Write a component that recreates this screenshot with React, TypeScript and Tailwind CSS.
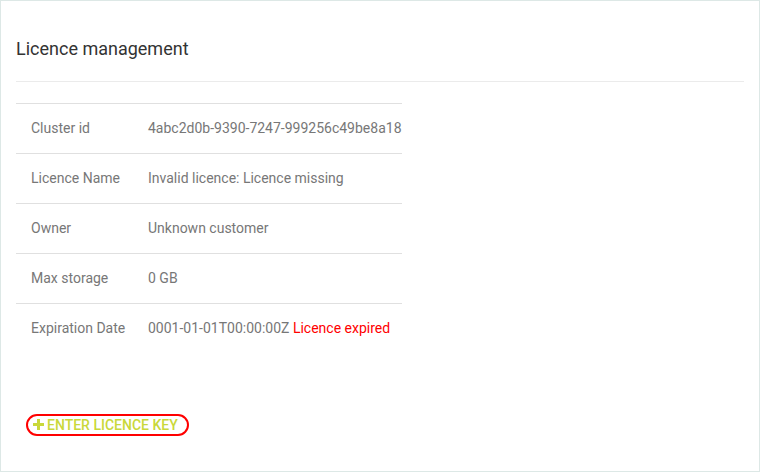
const rows: { label: string; value: string; note?: string }[] = [
  { label: "Cluster id", value: "4abc2d0b-9390-7247-999256c49be8a18" },
  { label: "Licence Name", value: "Invalid licence: Licence missing" },
  { label: "Owner", value: "Unknown customer" },
  { label: "Max storage", value: "0 GB" },
  {
    label: "Expiration Date",
    value: "0001-01-01T00:00:00Z",
    note: "Licence expired",
  },
];

export default function App() {
  return (
    <div className="h-[472px] w-[760px] bg-white font-['Roboto',sans-serif]">
      <div className="flex h-full flex-col border border-[#dde8e6] px-[15px]">
        <h2 className="pt-[38px] text-[18px] font-normal leading-[20px] text-[#333]">
          Licence management
        </h2>
        <div className="mt-[22px] h-px w-[728px] bg-[#ebebeb]" />
        <table className="mt-[21px] w-[386px] border-collapse text-[14px] text-[#777]">
          <tbody>
            {rows.map((r) => (
              <tr key={r.label} className="h-[50px] border-t border-[#e0e0e0]">
                <td className="w-[132px] pl-[15px] align-middle">{r.label}</td>
                <td className="align-middle whitespace-nowrap">
                  {r.value}
                  {r.note ? (
                    <span className="text-[#ff0000]"> {r.note}</span>
                  ) : null}
                </td>
              </tr>
            ))}
          </tbody>
        </table>
        <div className="mt-[60px] pl-[10px]">
          <button className="flex h-[22px] items-center gap-[3px] rounded-full border-2 border-[#ff0000] pr-[9px] pl-[5px] text-[14px] font-medium leading-none text-[#c9d83a]">
            <svg width="11" height="11" viewBox="0 0 11 11">
              <path d="M4 0h3v4h4v3H7v4H4V7H0V4h4z" fill="#c9d83a" />
            </svg>
            ENTER LICENCE KEY
          </button>
        </div>
      </div>
    </div>
  );
}
